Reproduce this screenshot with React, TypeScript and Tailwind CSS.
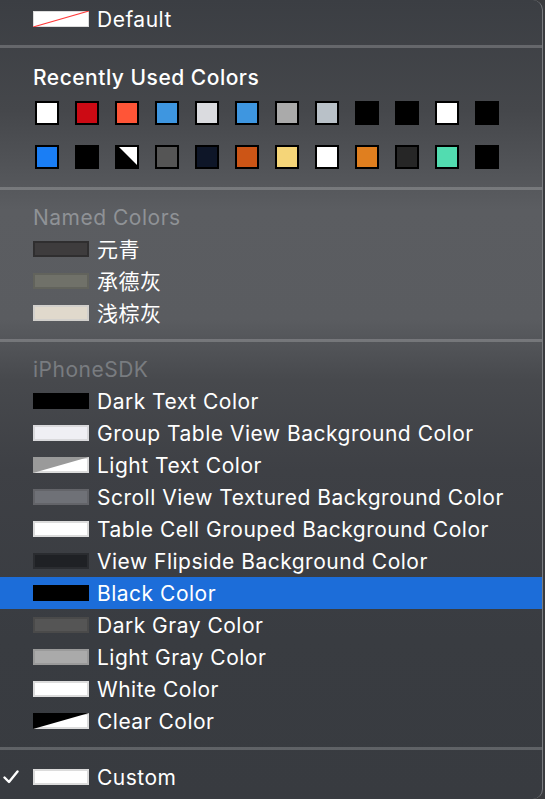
import React from 'react';

const recent: string[][] = [
  ['#ffffff', '#cc0a14', '#ff5537', '#3e96e0', '#dadbdf', '#3e96e0', '#aaaaaa', '#b9c1c8', '#000000', '#000000', '#ffffff', '#000000'],
  ['#1a7ef5', '#000000', 'half', '#555555', '#0e1628', '#cc5516', '#f5d578', '#ffffff', '#e07f1f', '#262626', '#52dcb0', '#000000'],
];

type Item = { label: string; fill?: string; border?: string; diag?: string; selected?: boolean };

const named: Item[] = [
  { label: '元青', fill: '#3e3c3d', border: '#2f2e2f' },
  { label: '承德灰', fill: '#707169', border: '#62635c' },
  { label: '浅棕灰', fill: '#e0d9cc', border: '#d2d0cc' },
];

const sdk: Item[] = [
  { label: 'Dark Text Color', fill: '#000000', border: '#000000' },
  { label: 'Group Table View Background Color', fill: '#efeff4', border: '#d9d9dc' },
  { label: 'Light Text Color', diag: '#9a9a9a' },
  { label: 'Scroll View Textured Background Color', fill: '#6f7177', border: '#636469' },
  { label: 'Table Cell Grouped Background Color', fill: '#ffffff', border: '#dcdcdc' },
  { label: 'View Flipside Background Color', fill: '#1f2125', border: '#2a2c30' },
  { label: 'Black Color', fill: '#000000', border: '#000000', selected: true },
  { label: 'Dark Gray Color', fill: '#555555', border: '#4a4a4a' },
  { label: 'Light Gray Color', fill: '#aaaaaa', border: '#9a9a9a' },
  { label: 'White Color', fill: '#ffffff', border: '#dcdcdc' },
  { label: 'Clear Color', diag: '#000000' },
];

function DiagSwatch({ color }: { color: string }) {
  return (
    <svg width="56" height="16" viewBox="0 0 56 16" className="shrink-0">
      <rect x="0" y="0" width="56" height="16" fill="#dcdcdc" />
      <rect x="2" y="2" width="52" height="12" fill="#ffffff" />
      <polygon points="0,0 56,0 0,16" fill={color} />
    </svg>
  );
}

function Swatch({ item }: { item: Item }) {
  if (item.diag) return <DiagSwatch color={item.diag} />;
  return (
    <div
      className="w-[56px] h-[16px] shrink-0 border-2"
      style={{ backgroundColor: item.fill, borderColor: item.border }}
    />
  );
}

function Row({ item }: { item: Item }) {
  return (
    <div className={`flex items-center h-[32px] pl-[33px] gap-[8px] ${item.selected ? 'bg-[#1c6dd9]' : ''}`}>
      <Swatch item={item} />
      <span className="text-white">{item.label}</span>
    </div>
  );
}

function Separator({ className = '' }: { className?: string }) {
  return <div className={`h-[3px] bg-white/20 ${className}`} />;
}

function GridSwatch({ color }: { color: string }) {
  if (color === 'half') {
    return (
      <svg width="24" height="24" viewBox="0 0 24 24">
        <rect width="24" height="24" fill="#000" />
        <polygon points="4,2 22,2 22,20" fill="#fff" />
      </svg>
    );
  }
  return <div className="w-[24px] h-[24px] border-2 border-black" style={{ backgroundColor: color }} />;
}

export default function App() {
  return (
    <div className="w-[545px] h-[799px] overflow-hidden bg-[#3a3b3e]">
      <div
        className="w-[543px] h-[799px] rounded-tr-[10px] rounded-br-[10px] border-r border-[#7a7c80] bg-[linear-gradient(180deg,#3b3e43_0px,#45474b_110px,#5b5d61_210px,#5a5c60_320px,#47494d_380px,#3e4045_470px,#393c41_640px,#383b40_799px)] text-[21px] tracking-[0.5px] leading-none"
        style={{ fontFamily: 'Inter, "Noto Sans CJK SC", sans-serif' }}
      >
        <div className="pt-[3px]">
          <div className="flex items-center h-[32px] pl-[33px] gap-[8px]">
            <svg width="56" height="16" viewBox="0 0 56 16" className="shrink-0">
              <rect width="56" height="16" fill="#dcdcdc" />
              <rect x="1" y="1" width="54" height="14" fill="#ffffff" />
              <line x1="0" y1="16" x2="56" y2="0" stroke="#ff3b3b" strokeWidth="1.2" />
            </svg>
            <span className="text-white">Default</span>
          </div>
        </div>
        <Separator className="mt-[10px]" />

        <div className="mt-[13px] flex items-center h-[32px] pl-[33px] text-white font-medium">Recently Used Colors</div>
        <div className="pl-[35px] pt-[8px] flex flex-col gap-[20px]">
          {recent.map((row, r) => (
            <div key={r} className="flex gap-[16px]">
              {row.map((c, i) => (
                <GridSwatch key={i} color={c} />
              ))}
            </div>
          ))}
        </div>
        <Separator className="mt-[18px]" />

        <div className="mt-[11px] flex items-center h-[32px] pl-[33px] text-[#8f9296]">Named Colors</div>
        {named.map((it) => (
          <Row key={it.label} item={it} />
        ))}
        <Separator className="mt-[10px]" />

        <div className="mt-[11px] flex items-center h-[32px] pl-[33px] text-[#797c80]">iPhoneSDK</div>
        {sdk.map((it) => (
          <Row key={it.label} item={it} />
        ))}
        <Separator className="mt-[10px]" />

        <div className="mt-[11px] flex items-center h-[32px] relative pl-[33px] gap-[8px]">
          <svg width="16" height="14" viewBox="0 0 16 14" className="absolute left-[3px] top-[9px]">
            <path d="M1.5 7.5 L6 12 L14.5 1.5" fill="none" stroke="#ffffff" strokeWidth="2.4" strokeLinecap="round" strokeLinejoin="round" />
          </svg>
          <div className="w-[56px] h-[16px] shrink-0 border-2 bg-white border-[#dcdcdc]" />
          <span className="text-white">Custom</span>
        </div>
      </div>
    </div>
  );
}
